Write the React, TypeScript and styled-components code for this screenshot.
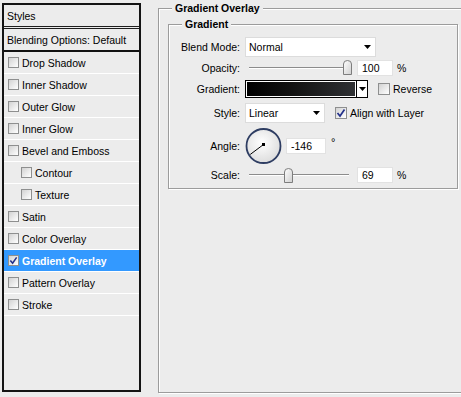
import React from "react";
import styled, { createGlobalStyle } from "styled-components";

const GlobalStyle = createGlobalStyle`
  html, body { margin: 0; padding: 0; background: #ececec; }
  body {
    font-family: "Liberation Sans", Arial, sans-serif;
    font-size: 10.5px;
    color: #000;
  }
`;

const effects = [
  { name: "Drop Shadow" },
  { name: "Inner Shadow" },
  { name: "Outer Glow" },
  { name: "Inner Glow" },
  { name: "Bevel and Emboss" },
  { name: "Contour", sub: true },
  { name: "Texture", sub: true },
  { name: "Satin" },
  { name: "Color Overlay" },
  { name: "Gradient Overlay", on: true },
  { name: "Pattern Overlay" },
  { name: "Stroke" },
];

const Page = styled.div`
  display: flex;
  align-items: flex-start;
  width: 461px;
  height: 397px;
  overflow: hidden;
  background: #ececec;
`;

const StylesList = styled.div`
  box-sizing: border-box;
  flex-shrink: 0;
  margin: 3px 0 0 2px;
  width: 139px;
  height: 389px;
  border: 2px solid #141414;
  display: flex;
  flex-direction: column;
`;

const ListHeader = styled.div`
  height: 21px;
  display: flex;
  align-items: center;
  padding-left: 3px;
  border-bottom: 3px double #1e1e1e;
`;

const BlendRow = styled.div`
  height: 21px;
  display: flex;
  align-items: center;
  padding-left: 3px;
  border-bottom: 2px solid #111;
`;

const EffectRow = styled.div<{ $sub?: boolean; $on?: boolean }>`
  height: 21px;
  display: flex;
  align-items: center;
  gap: 3px;
  padding-left: ${(p) => (p.$sub ? 17 : 4)}px;
  border-bottom: 1px solid #fff;
  background: ${(p) => (p.$on ? "#3399ff" : "transparent")};
  color: ${(p) => (p.$on ? "#fff" : "#000")};
  font-weight: ${(p) => (p.$on ? "bold" : "normal")};
`;

const Box = styled.span<{ $size: number }>`
  box-sizing: border-box;
  flex-shrink: 0;
  display: inline-flex;
  align-items: center;
  justify-content: center;
  width: ${(p) => p.$size}px;
  height: ${(p) => p.$size}px;
  border: 1px solid #8e8f8f;
  background: linear-gradient(135deg, #d2d2d2 0%, #f2f2f2 70%, #fff 100%);
`;

function CheckBox({ size = 11, checked }: { size?: number; checked?: boolean }) {
  return (
    <Box $size={size}>
      {checked && (
        <svg width={size - 2} height={size - 2} viewBox="0 0 10 10">
          <path d="M1.5 5 L4 8 L8.5 1.5" fill="none" stroke="#23308a" strokeWidth="1.7" />
        </svg>
      )}
    </Box>
  );
}

const GroupBox = styled.div<{ $w: number; $h: number }>`
  box-sizing: border-box;
  flex-shrink: 0;
  width: ${(p) => p.$w}px;
  height: ${(p) => p.$h}px;
  border: 1px solid #9c9c9c;
  box-shadow: inset 1px 1px 0 #fff, 1px 1px 0 #fff;
  display: flex;
  flex-direction: column;
`;

const OuterGroup = styled(GroupBox)`
  margin: 8px 0 0 17px;
`;

const InnerGroup = styled(GroupBox)`
  margin: 9px 0 0 9px;
`;

const Legend = styled.div`
  align-self: flex-start;
  margin: -7px 0 0 13px;
  padding: 0 3px;
  line-height: 13px;
  font-weight: bold;
  background: #ececec;
`;

const Form = styled.div`
  display: flex;
  flex-direction: column;
  margin-top: 6px;
`;

const Field = styled.div<{ $h: number }>`
  display: flex;
  align-items: center;
  height: ${(p) => p.$h}px;
`;

const Label = styled.span`
  flex-shrink: 0;
  width: 71px;
  margin-right: 5px;
  text-align: right;
`;

const Select = styled.div<{ $w: number }>`
  box-sizing: border-box;
  width: ${(p) => p.$w}px;
  height: 20px;
  display: flex;
  align-items: center;
  justify-content: space-between;
  padding: 0 4px 0 3px;
  background: #fff;
  border: 1px solid #dcdcdc;
`;

const ValueBox = styled.div<{ $w: number; $gap: number }>`
  box-sizing: border-box;
  width: ${(p) => p.$w}px;
  height: 16px;
  margin-left: ${(p) => p.$gap}px;
  padding-left: 4px;
  display: flex;
  align-items: center;
  background: #fff;
  border: 1px solid #e2e2e2;
`;

const Unit = styled.span<{ $gap: number }>`
  margin-left: ${(p) => p.$gap}px;
`;

const Degree = styled.span`
  align-self: flex-start;
  margin: 10px 0 0 5px;
  font-size: 11px;
`;

const SliderWrap = styled.div`
  position: relative;
  width: 100px;
  height: 15px;
  margin-left: 4px;
  display: flex;
  align-items: center;
`;

const Track = styled.div`
  width: 100%;
  border-top: 1px solid #8c8c8c;
  border-bottom: 1px solid #fff;
`;

const Thumb = styled.svg`
  position: absolute;
  top: 0;
`;

const Swatch = styled.div`
  box-sizing: border-box;
  width: 123px;
  height: 18px;
  display: flex;
  border: 1px solid #000;
`;

const SwatchFill = styled.div`
  flex: 1;
  border: 1px solid #fff;
  background: linear-gradient(to right, #000 0%, #111 40%, #2f3134 100%);
`;

const SwatchArrow = styled.div`
  width: 10px;
  display: flex;
  align-items: center;
  justify-content: center;
  border-left: 1px solid #000;
  background: #fff;
`;

const Option = styled.label<{ $gap: number }>`
  display: flex;
  align-items: center;
  gap: 3px;
  margin-left: ${(p) => p.$gap}px;
`;

function Arrow() {
  return (
    <svg width="7" height="4" viewBox="0 0 7 4">
      <path d="M0 0 H7 L3.5 4 Z" fill="#000" />
    </svg>
  );
}

function Slider({ pos }: { pos: number }) {
  return (
    <SliderWrap>
      <Track />
      <Thumb width="9" height="15" viewBox="0 0 9 15" style={{ left: pos * 100 - 4.5 }}>
        <defs>
          <linearGradient id="thumbFill" x1="0" y1="0" x2="1" y2="1">
            <stop offset="0" stopColor="#ffffff" />
            <stop offset="1" stopColor="#cfcfcf" />
          </linearGradient>
        </defs>
        <path
          d="M0.5 14.5 V4 Q0.5 0.5 4.5 0.5 Q8.5 0.5 8.5 4 V14.5 Z"
          fill="url(#thumbFill)"
          stroke="#7d7d7d"
        />
      </Thumb>
    </SliderWrap>
  );
}

function AngleDial({ angle }: { angle: number }) {
  const r = (angle * Math.PI) / 180;
  const x2 = 18.5 + Math.cos(r) * 16;
  const y2 = 18.5 - Math.sin(r) * 16;
  return (
    <svg width="37" height="38" viewBox="0 0 37 38">
      <defs>
        <radialGradient id="dialFill" cx="45%" cy="40%" r="65%">
          <stop offset="0" stopColor="#ffffff" />
          <stop offset="1" stopColor="#dadada" />
        </radialGradient>
      </defs>
      <circle cx="18.5" cy="19" r="17" fill="url(#dialFill)" stroke="#2e3d62" strokeWidth="1.8" />
      <line x1="18.5" y1="17.5" x2={x2} y2={y2} stroke="#000" strokeWidth="1" />
      <rect x="17" y="16" width="3" height="3" fill="#000" />
    </svg>
  );
}

export default function App() {
  return (
    <>
      <GlobalStyle />
      <Page>
        <StylesList>
          <ListHeader>Styles</ListHeader>
          <BlendRow>Blending Options: Default</BlendRow>
          {effects.map((e) => (
            <EffectRow key={e.name} $sub={e.sub} $on={e.on}>
              <CheckBox checked={e.on} />
              {e.name}
            </EffectRow>
          ))}
        </StylesList>

        <OuterGroup $w={310} $h={385}>
          <Legend>Gradient Overlay</Legend>
          <InnerGroup $w={290} $h={165}>
            <Legend>Gradient</Legend>
            <Form>
              <Field $h={20}>
                <Label>Blend Mode:</Label>
                <Select $w={131}>
                  Normal
                  <Arrow />
                </Select>
              </Field>
              <Field $h={21}>
                <Label>Opacity:</Label>
                <Slider pos={0.98} />
                <ValueBox $w={36} $gap={8}>100</ValueBox>
                <Unit $gap={4}>%</Unit>
              </Field>
              <Field $h={22}>
                <Label>Gradient:</Label>
                <Swatch>
                  <SwatchFill />
                  <SwatchArrow>
                    <Arrow />
                  </SwatchArrow>
                </Swatch>
                <Option $gap={10}>
                  <CheckBox size={12} />
                  Reverse
                </Option>
              </Field>
              <Field $h={26}>
                <Label>Style:</Label>
                <Select $w={80}>
                  Linear
                  <Arrow />
                </Select>
                <Option $gap={10}>
                  <CheckBox size={12} checked />
                  Align with Layer
                </Option>
              </Field>
              <Field $h={40}>
                <Label>Angle:</Label>
                <AngleDial angle={-146} />
                <ValueBox $w={40} $gap={4}>-146</ValueBox>
                <Degree>°</Degree>
              </Field>
              <Field $h={18}>
                <Label>Scale:</Label>
                <Slider pos={0.39} />
                <ValueBox $w={36} $gap={8}>69</ValueBox>
                <Unit $gap={4}>%</Unit>
              </Field>
            </Form>
          </InnerGroup>
        </OuterGroup>
      </Page>
    </>
  );
}
